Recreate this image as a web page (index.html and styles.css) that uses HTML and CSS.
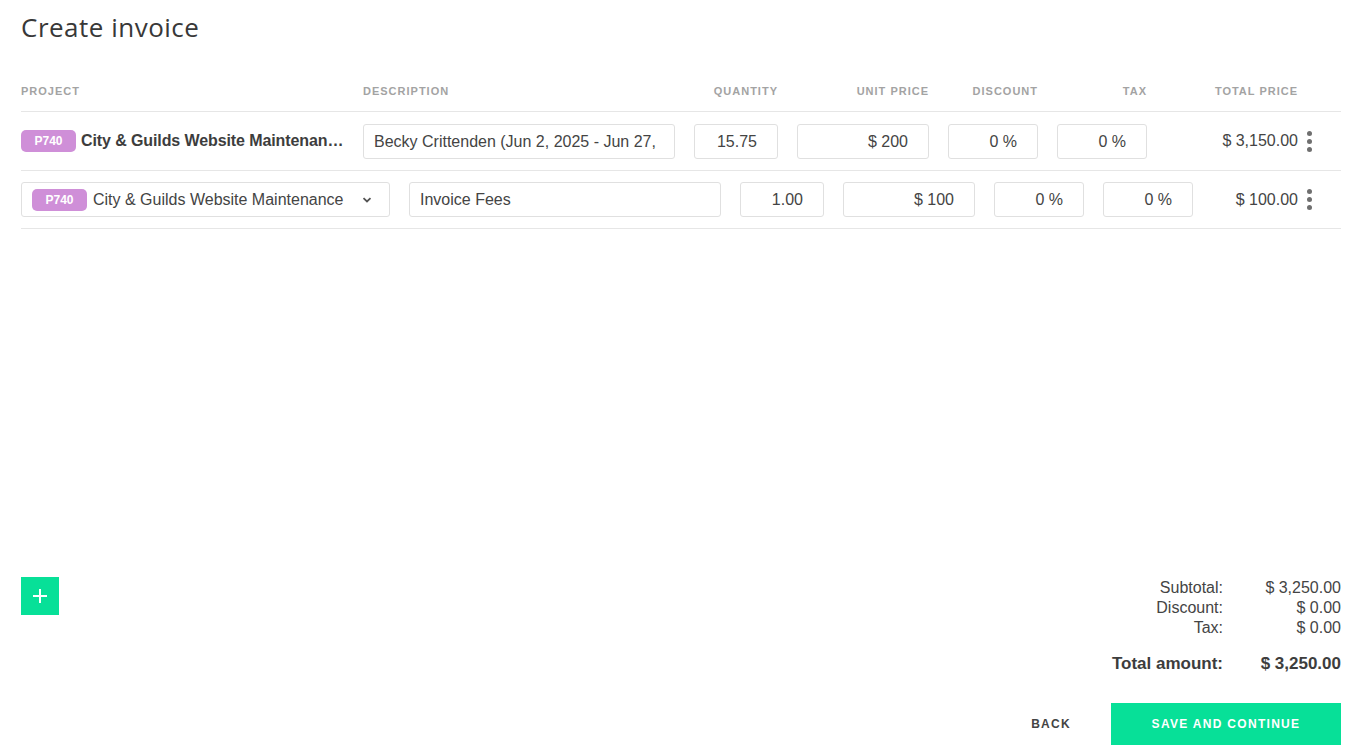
FILE: index.html
```html
<html>
<head>
<link rel="stylesheet" href="styles.css">
</head>
<body>
<div class="page">
  <h1 class="title">Create invoice</h1>

  <div class="lines">
    <div class="row head">
      <div class="c-project">Project</div>
      <div class="c-desc">Description</div>
      <div class="c-qty num">Quantity</div>
      <div class="c-unit num">Unit price</div>
      <div class="c-disc num">Discount</div>
      <div class="c-tax num">Tax</div>
      <div class="c-total num">Total price</div>
      <div class="c-menu"></div>
    </div>

    <div class="row item">
      <div class="c-project project-view">
        <span class="badge">P740</span>
        <span class="project-name">City &amp; Guilds Website Maintenance</span>
      </div>
      <div class="c-desc"><div class="field text wrap">Becky Crittenden (Jun 2, 2025 - Jun 27, 2025)</div></div>
      <div class="c-qty"><div class="field num">15.75</div></div>
      <div class="c-unit"><div class="field num">$ 200</div></div>
      <div class="c-disc"><div class="field num">0 %</div></div>
      <div class="c-tax"><div class="field num">0 %</div></div>
      <div class="c-total num total">$ 3,150.00</div>
      <div class="c-menu"><span class="dots"><i></i><i></i><i></i></span></div>
    </div>

    <div class="row item editing">
      <div class="c-project">
        <div class="field select">
          <span class="badge">P740</span>
          <span class="select-text">City &amp; Guilds Website Maintenance</span>
          <svg class="chev" width="10" height="6" viewBox="0 0 10 6"><path d="M1.5 1.2 5 4.5 8.5 1.2" fill="none" stroke="#555" stroke-width="1.8"/></svg>
        </div>
      </div>
      <div class="c-desc"><div class="field text">Invoice Fees</div></div>
      <div class="c-qty"><div class="field num">1.00</div></div>
      <div class="c-unit"><div class="field num">$ 100</div></div>
      <div class="c-disc"><div class="field num">0 %</div></div>
      <div class="c-tax"><div class="field num">0 %</div></div>
      <div class="c-total num total">$ 100.00</div>
      <div class="c-menu"><span class="dots"><i></i><i></i><i></i></span></div>
    </div>
  </div>

  <div class="bottom">
    <button class="add">
      <svg width="14" height="14" viewBox="0 0 14 14"><path d="M7 0v14M0 7h14" stroke="#fff" stroke-width="2"/></svg>
    </button>
    <div class="summary">
      <div class="sum-row"><span>Subtotal:</span><span>$ 3,250.00</span></div>
      <div class="sum-row"><span>Discount:</span><span>$ 0.00</span></div>
      <div class="sum-row"><span>Tax:</span><span>$ 0.00</span></div>
      <div class="sum-row grand"><span>Total amount:</span><span>$ 3,250.00</span></div>
    </div>
  </div>

  <div class="actions">
    <button class="back">Back</button>
    <button class="save">Save and continue</button>
  </div>
</div>
</body>
</html>
```

FILE: styles.css
```css
body {
  margin: 0;
  font-family: "Liberation Sans", Arial, sans-serif;
  color: #444;
  background: #fff;
}

.page {
  padding: 0 11px 0 21px;
  height: 756px;
  box-sizing: border-box;
  display: flex;
  flex-direction: column;
}

.title {
  font-family: "Open Sans", sans-serif;
  font-weight: 400;
  font-size: 26px;
  color: #383838;
  margin: 10px 0 0;
  line-height: 34px;
  letter-spacing: 0.5px;
}

/* line item table */
.lines {
  margin-top: 37px;
}

.row {
  display: flex;
  align-items: center;
  gap: 19px;
  border-bottom: 1px solid #e6e6e6;
}

.row.head {
  height: 31px;
  align-items: flex-start;
  padding-top: 4px;
  box-sizing: border-box;
  font-size: 11px;
  font-weight: bold;
  letter-spacing: 1px;
  text-transform: uppercase;
  color: #a3a3a3;
}

.row.item {
  height: 58px;
}

.row.item.editing {
  height: 57px;
}

.c-project { width: 323px; flex: none; }
.c-desc { width: 312px; flex: none; }
.c-qty { width: 84px; flex: none; }
.c-unit { width: 132px; flex: none; }
.c-disc { width: 90px; flex: none; }
.c-tax { width: 90px; flex: none; }
.c-total { flex: 1; }
.c-menu { width: 24px; flex: none; }

.editing .c-project { width: 369px; }

.num { text-align: right; }

.field {
  height: 35px;
  box-sizing: border-box;
  border: 1px solid #e0e0e0;
  border-radius: 3px;
  font-size: 16px;
  line-height: 33px;
  color: #444;
  white-space: nowrap;
  overflow: hidden;
}

.field.text { padding: 0 10px; }
.field.num { padding: 0 20px 0 10px; }

/* description behaves like a textarea: extra words wrap out of view */
.field.wrap { white-space: normal; }

.project-view {
  display: flex;
  align-items: center;
  gap: 5px;
  white-space: nowrap;
  overflow: hidden;
}

.project-name {
  font-weight: bold;
  font-size: 16px;
  color: #3d3d3d;
  letter-spacing: -0.1px;
  overflow: hidden;
  text-overflow: ellipsis;
}

.badge {
  flex: none;
  display: inline-block;
  width: 55px;
  height: 22px;
  line-height: 22px;
  text-align: center;
  border-radius: 5px;
  background: #cf8fd8;
  color: #fff;
  font-size: 12px;
  font-weight: bold;
}

.field.select {
  display: flex;
  align-items: center;
  padding: 0 10px;
  gap: 6px;
}

.select-text { flex: 1; }
.chev { margin-right: 7px; }

.total {
  font-size: 16px;
  color: #444;
}

.c-menu {
  display: flex;
  justify-content: flex-start;
}

.dots {
  display: flex;
  flex-direction: column;
  gap: 3px;
  margin-left: -10px;
}

.dots i {
  width: 5px;
  height: 5px;
  border-radius: 50%;
  background: #6f6f6f;
}

/* totals */
.bottom {
  margin-top: auto;
  display: flex;
  justify-content: space-between;
  align-items: flex-start;
}

.add {
  width: 38px;
  height: 38px;
  margin-top: -1px;
  border: 0;
  padding: 0;
  background: #07e098;
  display: flex;
  align-items: center;
  justify-content: center;
}

.summary {
  font-size: 16px;
  color: #444;
}

.sum-row {
  display: grid;
  grid-template-columns: 112px 118px;
  text-align: right;
  line-height: 20px;
}

.sum-row.grand {
  margin-top: 16px;
  font-weight: bold;
  font-size: 17px;
  color: #3d3d3d;
}

.actions {
  display: flex;
  justify-content: flex-end;
  align-items: center;
  margin: 29px 0 11px;
}

.actions button {
  border: 0;
  font-family: "Liberation Sans", Arial, sans-serif;
  font-size: 12px;
  font-weight: bold;
  letter-spacing: 1.3px;
  text-transform: uppercase;
  cursor: pointer;
}

.back {
  background: none;
  color: #444;
  padding: 0 40px 0 0;
}

.save {
  width: 230px;
  height: 42px;
  background: #07e098;
  color: #fff;
}
```
